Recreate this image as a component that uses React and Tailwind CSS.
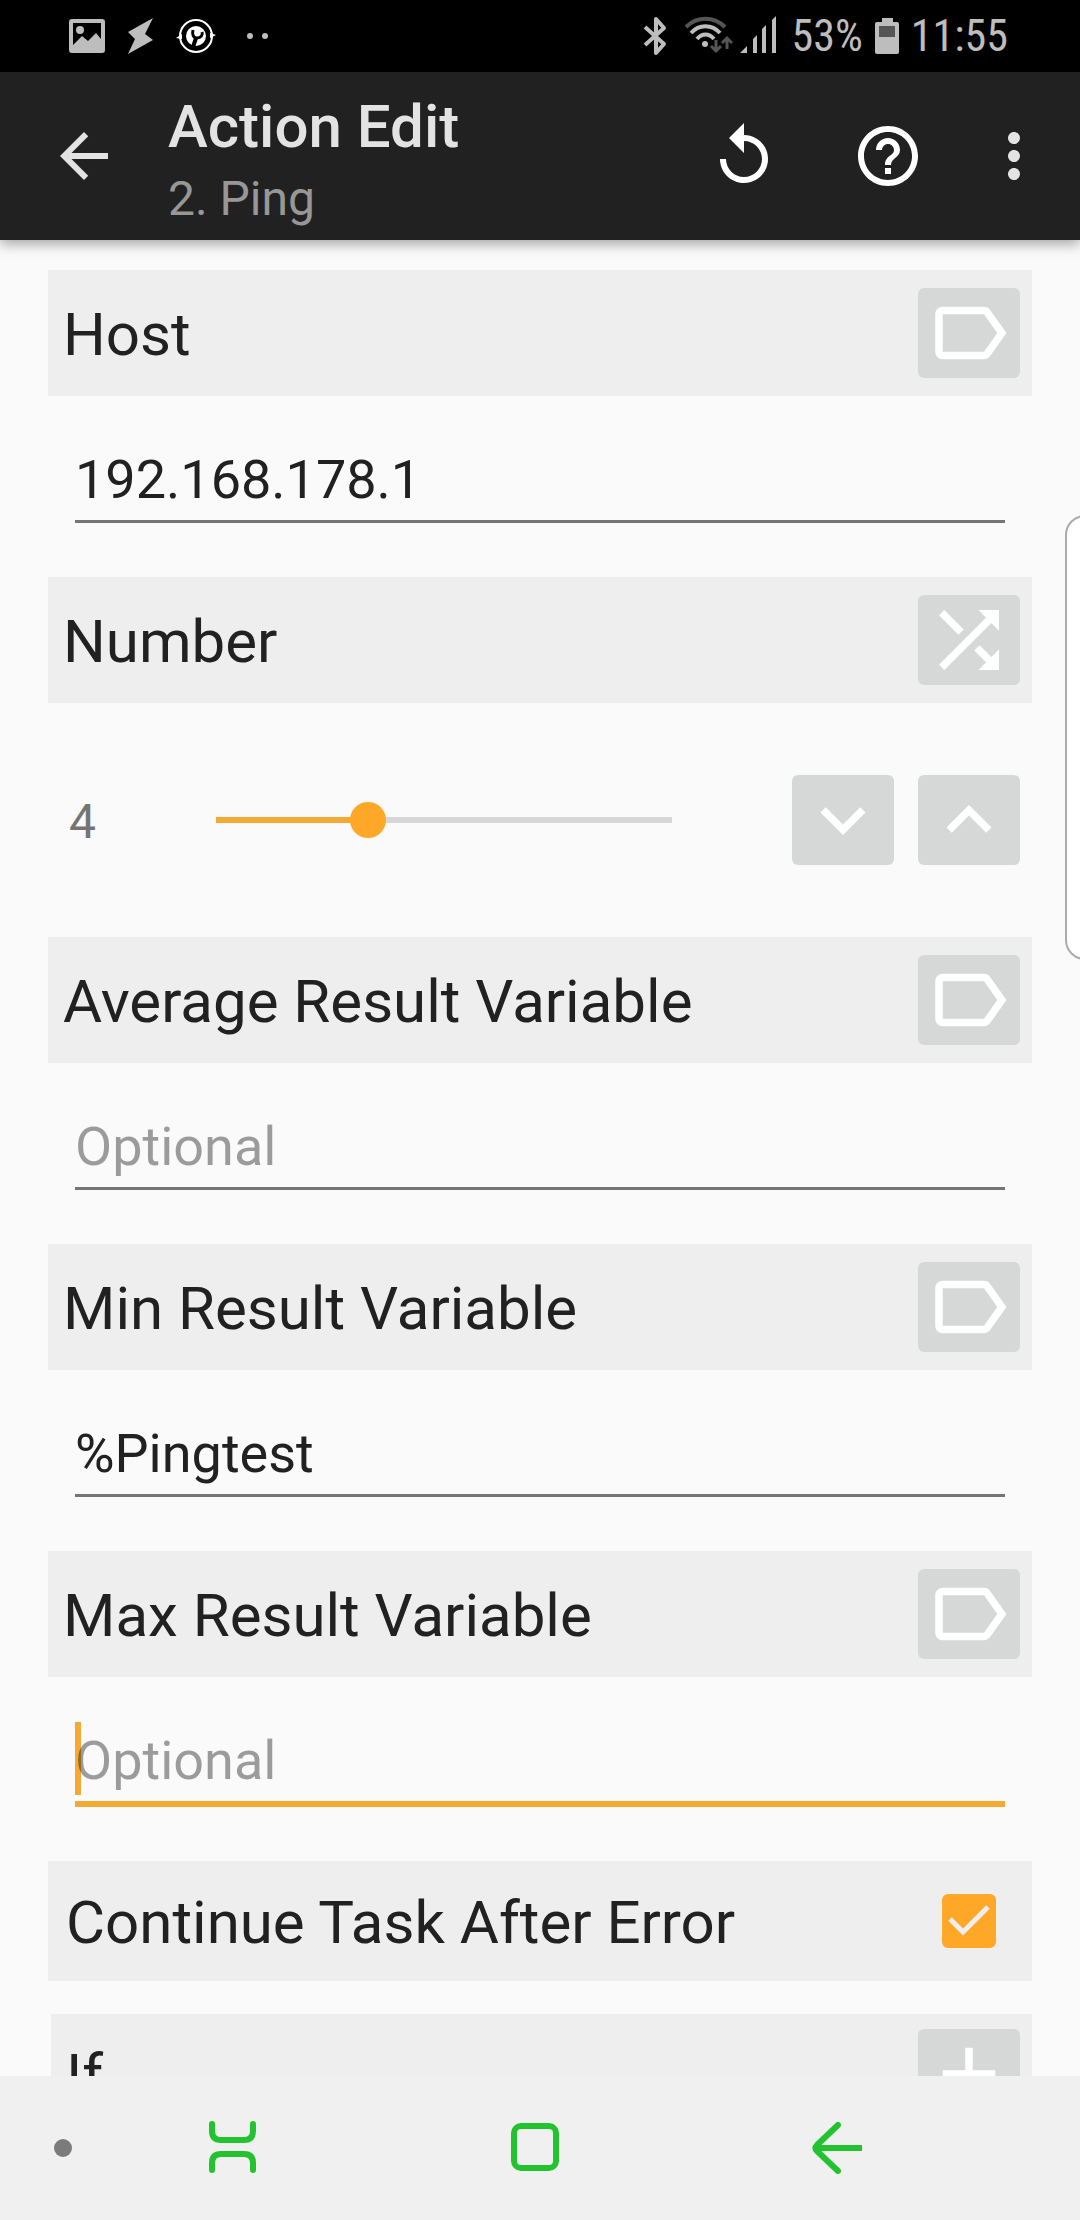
import React, { useState } from "react";

// 24x24 material glyphs
const ICONS = {
  back: "M20 11H7.83l5.59-5.59L12 4l-8 8 8 8 1.41-1.41L7.83 13H20v-2z",
  replay:
    "M12 5V1L7 6l5 5V7c3.31 0 6 2.69 6 6s-2.69 6-6 6-6-2.69-6-6H4c0 4.42 3.58 8 8 8s8-3.58 8-8-3.58-8-8-8z",
  help: "M11 18h2v-2h-2v2zm1-16C6.48 2 2 6.48 2 12s4.48 10 10 10 10-4.48 10-10S17.52 2 12 2zm0 18c-4.41 0-8-3.59-8-8s3.59-8 8-8 8 3.59 8 8-3.59 8-8 8zm0-14c-2.21 0-4 1.79-4 4h2c0-1.1.9-2 2-2s2 .9 2 2c0 2-3 1.75-3 5h2c0-2.25 3-2.5 3-5 0-2.21-1.79-4-4-4z",
  more: "M12 8c1.1 0 2-.9 2-2s-.9-2-2-2-2 .9-2 2 .9 2 2 2zm0 2c-1.1 0-2 .9-2 2s.9 2 2 2 2-.9 2-2-.9-2-2-2zm0 6c-1.1 0-2 .9-2 2s.9 2 2 2 2-.9 2-2-.9-2-2-2z",
  label:
    "M17.63 5.84C17.27 5.33 16.67 5 16 5L5 5.01C3.9 5.01 3 5.9 3 7v10c0 1.1.9 1.99 2 1.99L16 19c.67 0 1.27-.33 1.63-.84L22 12l-4.37-6.16zM16 17H5V7h11l3.55 5L16 17z",
  shuffle:
    "M10.59 9.17L5.41 4 4 5.41l5.17 5.17 1.42-1.41zM14.5 4l2.04 2.04L4 18.59 5.41 20 17.96 7.46 20 9.5V4h-5.5zm.33 9.41l-1.41 1.41 3.13 3.13L14.5 20H20v-5.5l-2.04 2.04-3.13-3.13z",
  down: "M16.59 8.59L12 13.17 7.41 8.59 6 10l6 6 6-6z",
  up: "M12 8l-6 6 1.41 1.41L12 10.83l4.59 4.58L18 14z",
  plus: "M19 13h-6v6h-2v-6H5v-2h6V5h2v6h6v2z",
};

function Icon({ name, className }) {
  return (
    <svg viewBox="0 0 24 24" fill="currentColor" className={className} aria-hidden="true">
      <path d={ICONS[name]} />
    </svg>
  );
}

function BarButton({ icon, label, className }) {
  return (
    <button type="button" aria-label={label} className={className}>
      <Icon name={icon} className="size-18" />
    </button>
  );
}

function TileButton({ icon, label, onClick }) {
  return (
    <button
      type="button"
      aria-label={label}
      onClick={onClick}
      className="flex h-[90px] w-[102px] shrink-0 items-center justify-center rounded-md bg-[#d6d8d7] text-white"
    >
      <Icon name={icon} className="size-[90px]" />
    </button>
  );
}

function StatusBar() {
  return (
    <div className="flex h-18 shrink-0 items-center justify-between bg-black pr-[72px] pl-[69px] text-[#bdbdbd]">
      <div className="flex items-center">
        <svg width="36" height="36" viewBox="0 0 36 36" aria-hidden="true">
          <path
            fill="currentColor"
            fillRule="evenodd"
            d="M3 1h30a3 3 0 0 1 3 3v28a3 3 0 0 1-3 3H3a3 3 0 0 1-3-3V4a3 3 0 0 1 3-3zM4 5v22l9-9 6 5 8-8 5 6V5z"
          />
          <circle cx="11" cy="12" r="4" fill="currentColor" />
        </svg>
        <svg className="ml-[22px]" width="27" height="36" viewBox="0 0 27 36" aria-hidden="true">
          <path fill="currentColor" d="M26 0L1 14l7 7-7 15 25-14-8-6z" />
        </svg>
        <svg className="ml-[22px] text-white" width="40" height="36" viewBox="0 0 40 36" aria-hidden="true">
          <circle cx="20" cy="18" r="16" fill="none" stroke="currentColor" strokeWidth="2" />
          <circle cx="20" cy="18" r="10" fill="currentColor" />
          <path fill="currentColor" d="M0 20l6-4v5zM40 17l-6-2v5z" />
          <path d="M17 29l3-9" fill="none" stroke="#000" strokeWidth="4" />
          <path d="M17 12c-1 4 0 8 4 8s6-3 5-6" fill="none" stroke="#000" strokeWidth="3" />
        </svg>
        <svg className="ml-[30px]" width="24" height="8" viewBox="0 0 24 8" aria-hidden="true">
          <circle cx="4" cy="4" r="3" fill="currentColor" />
          <circle cx="19" cy="4" r="3" fill="currentColor" />
        </svg>
      </div>
      <div className="flex items-center">
        <svg width="24" height="40" viewBox="0 0 24 40" aria-hidden="true">
          <path
            d="M2 11l19 17-8 9V3l8 9L2 29"
            fill="none"
            stroke="currentColor"
            strokeWidth="4"
            strokeLinejoin="round"
          />
        </svg>
        <svg className="ml-[18px]" width="48" height="40" viewBox="0 0 48 40" aria-hidden="true">
          <g fill="none" stroke="currentColor" strokeWidth="4">
            <path stroke="#555" d="M1 11c11-11 28-11 39 0" />
            <path d="M6 17c8-9 21-9 29 0M12 23c5-6 12-6 17 0" />
          </g>
          <circle cx="20" cy="28" r="3" fill="currentColor" />
          <path
            fill="none"
            stroke="#555"
            strokeWidth="3"
            d="M31 24v11m-5-5l5 5 5-5M42 33V22m-5 5l5-5 5 5"
          />
        </svg>
        <svg
          className="ml-[7px]"
          width="36"
          height="40"
          viewBox="0 0 36 40"
          fill="currentColor"
          aria-hidden="true"
        >
          <path d="M0 37l7-7v7zM13 23l4-4v18h-4zM22 13l4-4v28h-4zM32 4l4-4v37h-4z" />
        </svg>
        <span className="ml-4 font-['Roboto_Condensed',Roboto,sans-serif] text-[44px] leading-none">
          53%
        </span>
        <svg className="ml-[12px]" width="24" height="36" viewBox="0 0 24 36" aria-hidden="true">
          <path
            fill="currentColor"
            d="M7 0h11v4h4a2 2 0 0 1 2 2v28a2 2 0 0 1-2 2H2a2 2 0 0 1-2-2V6a2 2 0 0 1 2-2h5z"
          />
          <path fill="#555" d="M4 8h16v11H4z" />
        </svg>
        <span className="ml-[12px] font-['Roboto_Condensed',Roboto,sans-serif] text-[44px] leading-none">
          11:55
        </span>
      </div>
    </div>
  );
}

function AppBar() {
  return (
    <header className="z-10 flex h-[168px] shrink-0 items-center bg-[#212121] pr-[30px] pl-12 text-[#e3e3e3] shadow-[0_4px_12px_rgba(0,0,0,0.35)]">
      <BarButton icon="back" label="Back" />
      <div className="min-w-0 flex-1 pt-[14px] pl-12">
        <h1 className="text-[60px] leading-[72px] font-medium">Action Edit</h1>
        <p className="text-[48px] leading-[72px] text-[#979797]">2. Ping</p>
      </div>
      <BarButton icon="replay" label="Restore" className="text-white" />
      <BarButton icon="help" label="Help" className="ml-18 text-white" />
      <BarButton icon="more" label="More options" className="ml-[54px]" />
    </header>
  );
}

function SectionHeader({ title, htmlFor, icon, iconLabel }) {
  return (
    <div className="flex h-[126px] items-center justify-between bg-[#eeeeee] pr-3 pl-[15px]">
      <label htmlFor={htmlFor} className="pt-1 text-[60px] leading-[72px]">
        {title}
      </label>
      <TileButton icon={icon} label={iconLabel} />
    </div>
  );
}

function TextField({ id, title, value, placeholder, onChange, active }) {
  return (
    <section>
      <SectionHeader title={title} htmlFor={id} icon="label" iconLabel={`${title} variable`} />
      <div className="relative mx-[27px] mt-12 mb-[54px]">
        {active && <span className="absolute -top-[3px] left-0 h-[73px] w-1.5 bg-[#f2aa33]" />}
        <input
          id={id}
          type="text"
          value={value}
          placeholder={placeholder}
          onChange={(e) => onChange(id, e.target.value)}
          className={`relative block w-full pb-1 text-[54px] leading-[72px] outline-none placeholder:text-black/38 ${
            active ? "border-b-6 border-[#f2aa33]" : "border-b-3 border-[#757575]"
          }`}
        />
      </div>
    </section>
  );
}

function NumberField({ value, onChange }) {
  const min = 1;
  const max = 10;
  const percent = ((value - min) / (max - min)) * 100;

  return (
    <section>
      <SectionHeader title="Number" htmlFor="number" icon="shuffle" iconLabel="Number variable" />
      <div className="flex items-center py-18 pr-3 pl-[21px]">
        <span className="w-[147px] pt-1 text-[48px] leading-[72px] text-[#757575]">{value}</span>
        <div className="relative flex h-9 flex-1 items-center">
          <div className="h-1.5 w-full bg-[#d6d6d6]">
            <div className="h-full bg-[#f2aa33]" style={{ width: `${percent}%` }} />
          </div>
          <span
            className="absolute size-9 -translate-x-1/2 rounded-full bg-[#ffa726]"
            style={{ left: `${percent}%` }}
          />
          <input
            id="number"
            type="range"
            min={min}
            max={max}
            value={value}
            onChange={(e) => onChange(Number(e.target.value))}
            className="absolute inset-0 w-full cursor-pointer opacity-0"
          />
        </div>
        <div className="ml-[120px] flex gap-6">
          <TileButton icon="down" label="Decrease" onClick={() => onChange(Math.max(min, value - 1))} />
          <TileButton icon="up" label="Increase" onClick={() => onChange(Math.min(max, value + 1))} />
        </div>
      </div>
    </section>
  );
}

function ContinueRow({ checked, onChange }) {
  return (
    <div className="flex h-[120px] items-center justify-between bg-[#eeeeee] pr-9 pl-[18px]">
      <label htmlFor="continue" className="pt-1 text-[60px] leading-[72px]">
        Continue Task After Error
      </label>
      <span className="relative size-[54px]">
        <input
          id="continue"
          type="checkbox"
          checked={checked}
          onChange={(e) => onChange(e.target.checked)}
          className="block size-full appearance-none rounded-md border-6 border-[#757575] checked:border-[#ffa726] checked:bg-[#ffa726]"
        />
        {checked && (
          <svg viewBox="0 0 54 54" className="pointer-events-none absolute inset-0" aria-hidden="true">
            <path d="M8 25l13 13 25-25" fill="none" stroke="#eeeeee" strokeWidth="5" />
          </svg>
        )}
      </span>
    </div>
  );
}

function NavBar() {
  return (
    <nav className="flex h-36 shrink-0 items-center bg-[#f0f0f0] pl-[54px] text-[#22c32e]">
      <span className="size-[18px] rounded-full bg-[#7b7b7b]" />
      <div className="flex flex-1 items-center justify-between pr-[216px] pl-[134px]">
        <button type="button" aria-label="Recent apps">
          <svg
            width="54"
            height="54"
            viewBox="0 0 54 54"
            fill="none"
            stroke="currentColor"
            strokeWidth="6"
            strokeLinecap="round"
            aria-hidden="true"
          >
            <path d="M6 3v7q0 9 9 9h23q9 0 9-9V3M6 49v-7q0-9 9-9h23q9 0 9 9v7" />
          </svg>
        </button>
        <button type="button" aria-label="Home">
          <svg
            width="54"
            height="54"
            viewBox="0 0 54 54"
            fill="none"
            stroke="currentColor"
            strokeWidth="6"
            aria-hidden="true"
          >
            <rect x="6" y="5" width="42" height="42" rx="7" />
          </svg>
        </button>
        <button type="button" aria-label="Back">
          <svg
            width="54"
            height="54"
            viewBox="0 0 54 54"
            fill="none"
            stroke="currentColor"
            strokeWidth="6"
            aria-hidden="true"
          >
            <path strokeLinecap="round" d="M28 4L7 24q-3 3 0 6l21 20" />
            <path d="M8 27h44" />
          </svg>
        </button>
      </div>
    </nav>
  );
}

function App() {
  const [number, setNumber] = useState(4);
  const [keepGoing, setKeepGoing] = useState(true);
  const [data, setData] = useState({
    host: "192.168.178.1",
    average: "",
    min: "%Pingtest",
    max: "",
  });

  const handleChange = (name, value) => {
    setData({ ...data, [name]: value });
  };

  return (
    <div className="relative flex h-screen flex-col overflow-hidden bg-[#fafafa] font-[Roboto,sans-serif] text-[#212121]">
      <StatusBar />
      <AppBar />
      <main className="min-h-0 flex-1 overflow-y-auto px-12 pt-[30px] [scrollbar-width:none]">
        <TextField id="host" title="Host" value={data.host} onChange={handleChange} />
        <NumberField value={number} onChange={setNumber} />
        <TextField
          id="average"
          title="Average Result Variable"
          value={data.average}
          placeholder="Optional"
          onChange={handleChange}
        />
        <TextField id="min" title="Min Result Variable" value={data.min} onChange={handleChange} />
        <TextField
          id="max"
          title="Max Result Variable"
          value={data.max}
          placeholder="Optional"
          onChange={handleChange}
          active
        />
        <ContinueRow checked={keepGoing} onChange={setKeepGoing} />
        <div className="mt-[33px] ml-[3px] flex h-[120px] items-center justify-between bg-[#eeeeee] pr-3 pl-[15px]">
          <h2 className="pt-1 text-[60px] leading-[72px]">If</h2>
          <TileButton icon="plus" label="Add condition" />
        </div>
      </main>
      <NavBar />
      {/* edge panel handle */}
      <div className="absolute top-[515px] -right-[9px] h-[445px] w-6 rounded-l-[20px] border-2 border-[#ababab] bg-white" />
    </div>
  );
}

export default App;
